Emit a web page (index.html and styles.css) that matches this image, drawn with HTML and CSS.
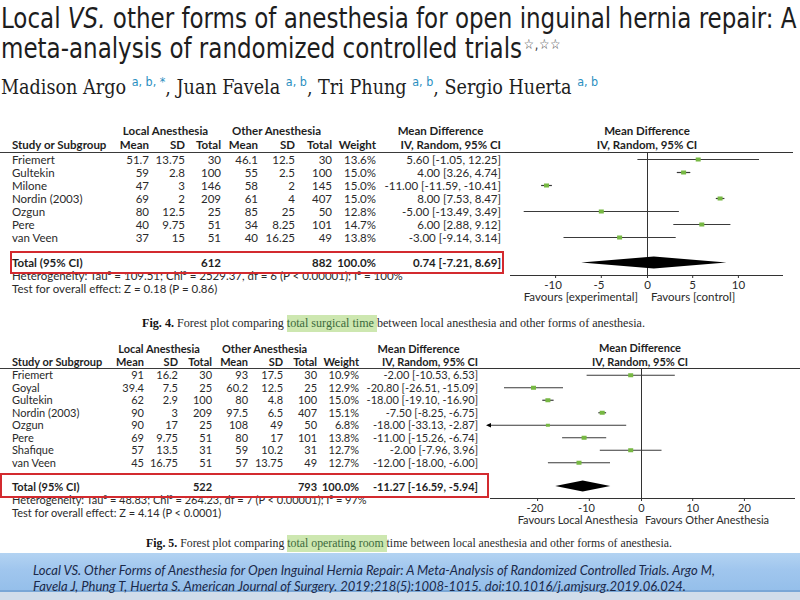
FILE: index.html
```html
<!DOCTYPE html>
<html>
<head>
<meta charset="utf-8">
<link rel="stylesheet" href="styles.css">
</head>
<body>
<header class="paper-head">
  <h1 class="title">Local <i>VS.</i> other forms of anesthesia for open inguinal hernia repair: A<br>meta-analysis of randomized controlled trials<sup class="stars">☆,☆☆</sup></h1>
  <p class="authors">Madison Argo <sup>a, b, *</sup>, Juan Favela <sup>a, b</sup>, Tri Phung <sup>a, b</sup>, Sergio Huerta <sup>a, b</sup></p>
</header>

<section class="figure fig4">
  <div class="forest">
    <div class="table-wrap">
      <table class="data">
        <colgroup><col class="c-study"><col class="c-n1"><col class="c-n2"><col class="c-n3"><col class="c-n4"><col class="c-n5"><col class="c-n6"><col class="c-w"><col class="c-md"></colgroup>
        <thead>
          <tr class="h1"><th></th><th colspan="3" class="grp">Local Anesthesia</th><th colspan="3" class="grp">Other Anesthesia</th><th></th><th class="grp">Mean Difference</th></tr>
          <tr class="h2"><th class="l">Study or Subgroup</th><th>Mean</th><th>SD</th><th>Total</th><th>Mean</th><th>SD</th><th>Total</th><th>Weight</th><th>IV, Random, 95% CI</th></tr>
        </thead>
        <tbody>
          <tr><td class="l">Friemert</td><td>51.7</td><td>13.75</td><td>30</td><td>46.1</td><td>12.5</td><td>30</td><td>13.6%</td><td>5.60 [-1.05, 12.25]</td></tr>
          <tr><td class="l">Gultekin</td><td>59</td><td>2.8</td><td>100</td><td>55</td><td>2.5</td><td>100</td><td>15.0%</td><td>4.00 [3.26, 4.74]</td></tr>
          <tr><td class="l">Milone</td><td>47</td><td>3</td><td>146</td><td>58</td><td>2</td><td>145</td><td>15.0%</td><td>-11.00 [-11.59, -10.41]</td></tr>
          <tr><td class="l">Nordin (2003)</td><td>69</td><td>2</td><td>209</td><td>61</td><td>4</td><td>407</td><td>15.0%</td><td>8.00 [7.53, 8.47]</td></tr>
          <tr><td class="l">Ozgun</td><td>80</td><td>12.5</td><td>25</td><td>85</td><td>25</td><td>50</td><td>12.8%</td><td>-5.00 [-13.49, 3.49]</td></tr>
          <tr><td class="l">Pere</td><td>40</td><td>9.75</td><td>51</td><td>34</td><td>8.25</td><td>101</td><td>14.7%</td><td>6.00 [2.88, 9.12]</td></tr>
          <tr><td class="l">van Veen</td><td>37</td><td>15</td><td>51</td><td>40</td><td>16.25</td><td>49</td><td>13.8%</td><td>-3.00 [-9.14, 3.14]</td></tr>
          <tr class="spacer"><td colspan="9"></td></tr>
          <tr class="total"><td class="l">Total (95% CI)</td><td></td><td></td><td>612</td><td></td><td></td><td>882</td><td>100.0%</td><td>0.74 [-7.21, 8.69]</td></tr>
        </tbody>
      </table>
      <p class="stat">Heterogeneity: Tau² = 109.51; Chi² = 2529.37, df = 6 (P &lt; 0.00001); I² = 100%</p>
      <p class="stat">Test for overall effect: Z = 0.18 (P = 0.86)</p>
      <div class="redbox"></div>
    </div>
    <svg class="plot" width="295" height="180" viewBox="0 0 295 180">
      <text class="ph" x="142" y="11" text-anchor="middle">Mean Difference</text>
      <text class="ph" x="142" y="25" text-anchor="middle">IV, Random, 95% CI</text>
      <line x1="0" y1="28.5" x2="288" y2="28.5" class="ax"/>
      <line x1="142.5" y1="28" x2="142.5" y2="151" class="ax"/>
      <line x1="5" y1="151.5" x2="278" y2="151.5" class="ax"/>
      <g class="ax">
        <line x1="50.6" y1="151" x2="50.6" y2="154"/>
        <line x1="96.3" y1="151" x2="96.3" y2="154"/>
        <line x1="142.5" y1="151" x2="142.5" y2="154"/>
        <line x1="187.7" y1="151" x2="187.7" y2="154"/>
        <line x1="233.4" y1="151" x2="233.4" y2="154"/>
      </g>
      <g class="tick" text-anchor="middle">
        <text x="48" y="165">-10</text>
        <text x="94" y="165">-5</text>
        <text x="142.5" y="165">0</text>
        <text x="187.7" y="165">5</text>
        <text x="233.4" y="165">10</text>
      </g>
      <text class="tick" x="133" y="177" text-anchor="end">Favours [experimental]</text>
      <text class="tick" x="146" y="177">Favours [control]</text>
      <g class="ci">
        <line x1="132.4" y1="35.5" x2="254" y2="35.5"/>
        <line x1="171.8" y1="48.5" x2="185.3" y2="48.5"/>
        <line x1="36.1" y1="61.5" x2="46.9" y2="61.5"/>
        <line x1="210.8" y1="74.5" x2="219.4" y2="74.5"/>
        <line x1="18.7" y1="87.5" x2="173.9" y2="87.5"/>
        <line x1="168.3" y1="100.5" x2="225.4" y2="100.5"/>
        <line x1="58.5" y1="113.5" x2="170.7" y2="113.5"/>
      </g>
      <g class="pt">
        <rect x="190.7" y="33.5" width="5" height="4"/>
        <rect x="176.1" y="46.5" width="5" height="4"/>
        <rect x="39" y="59.5" width="5" height="4"/>
        <rect x="212.6" y="72.5" width="5" height="4"/>
        <rect x="93.8" y="85.5" width="5" height="4"/>
        <rect x="194.3" y="98.5" width="5" height="4"/>
        <rect x="112.1" y="111.5" width="5" height="4"/>
      </g>
      <polygon class="dia" points="76.1,138.5 148.8,132.5 221.4,138.5 148.8,144.5"/>
    </svg>
  </div>
  <p class="caption"><b>Fig. 4.</b> Forest plot comparing <mark>total surgical time </mark>between local anesthesia and other forms of anesthesia.</p>
</section>

<section class="figure fig5">
  <div class="forest">
    <div class="table-wrap">
      <table class="data">
        <colgroup><col class="c-study"><col class="c-n1"><col class="c-n2"><col class="c-n3"><col class="c-n4"><col class="c-n5"><col class="c-n6"><col class="c-w"><col class="c-md"></colgroup>
        <thead>
          <tr class="h1"><th></th><th colspan="3" class="grp">Local Anesthesia</th><th colspan="3" class="grp">Other Anesthesia</th><th></th><th class="grp">Mean Difference</th></tr>
          <tr class="h2"><th class="l">Study or Subgroup</th><th>Mean</th><th>SD</th><th>Total</th><th>Mean</th><th>SD</th><th>Total</th><th>Weight</th><th>IV, Random, 95% CI</th></tr>
        </thead>
        <tbody>
          <tr><td class="l">Friemert</td><td>91</td><td>16.2</td><td>30</td><td>93</td><td>17.5</td><td>30</td><td>10.9%</td><td>-2.00 [-10.53, 6.53]</td></tr>
          <tr><td class="l">Goyal</td><td>39.4</td><td>7.5</td><td>25</td><td>60.2</td><td>12.5</td><td>25</td><td>12.9%</td><td>-20.80 [-26.51, -15.09]</td></tr>
          <tr><td class="l">Gultekin</td><td>62</td><td>2.9</td><td>100</td><td>80</td><td>4.8</td><td>100</td><td>15.0%</td><td>-18.00 [-19.10, -16.90]</td></tr>
          <tr><td class="l">Nordin (2003)</td><td>90</td><td>3</td><td>209</td><td>97.5</td><td>6.5</td><td>407</td><td>15.1%</td><td>-7.50 [-8.25, -6.75]</td></tr>
          <tr><td class="l">Ozgun</td><td>90</td><td>17</td><td>25</td><td>108</td><td>49</td><td>50</td><td>6.8%</td><td>-18.00 [-33.13, -2.87]</td></tr>
          <tr><td class="l">Pere</td><td>69</td><td>9.75</td><td>51</td><td>80</td><td>17</td><td>101</td><td>13.8%</td><td>-11.00 [-15.26, -6.74]</td></tr>
          <tr><td class="l">Shafique</td><td>57</td><td>13.5</td><td>31</td><td>59</td><td>10.2</td><td>31</td><td>12.7%</td><td>-2.00 [-7.96, 3.96]</td></tr>
          <tr><td class="l">van Veen</td><td>45</td><td>16.75</td><td>51</td><td>57</td><td>13.75</td><td>49</td><td>12.7%</td><td>-12.00 [-18.00, -6.00]</td></tr>
          <tr class="spacer"><td colspan="9"></td></tr>
          <tr class="total"><td class="l">Total (95% CI)</td><td></td><td></td><td>522</td><td></td><td></td><td>793</td><td>100.0%</td><td>-11.27 [-16.59, -5.94]</td></tr>
        </tbody>
      </table>
      <p class="stat">Heterogeneity: Tau² = 48.83; Chi² = 264.23, df = 7 (P &lt; 0.00001); I² = 97%</p>
      <p class="stat">Test for overall effect: Z = 4.14 (P &lt; 0.0001)</p>
      <div class="redbox"></div>
    </div>
    <svg class="plot" width="320" height="185" viewBox="0 0 320 185">
      <text class="ph" x="160" y="10" text-anchor="middle">Mean Difference</text>
      <text class="ph" x="160" y="24" text-anchor="middle">IV, Random, 95% CI</text>
      <line x1="0" y1="26.5" x2="320" y2="26.5" class="ax"/>
      <line x1="161.5" y1="26" x2="161.5" y2="156" class="ax"/>
      <line x1="10" y1="156.5" x2="315" y2="156.5" class="ax"/>
      <g class="ax">
        <line x1="57.6" y1="156" x2="57.6" y2="159"/>
        <line x1="109.3" y1="156" x2="109.3" y2="159"/>
        <line x1="161.5" y1="156" x2="161.5" y2="159"/>
        <line x1="212.7" y1="156" x2="212.7" y2="159"/>
        <line x1="264.4" y1="156" x2="264.4" y2="159"/>
      </g>
      <g class="tick" text-anchor="middle">
        <text x="55" y="170">-20</text>
        <text x="106.5" y="170">-10</text>
        <text x="161.5" y="170">0</text>
        <text x="212.7" y="170">10</text>
        <text x="264.4" y="170">20</text>
      </g>
      <text class="tick" x="158" y="182" text-anchor="end">Favours Local Anesthesia</text>
      <text class="tick" x="165" y="182">Favours Other Anesthesia</text>
      <g class="ci">
        <line x1="106.6" y1="33.25" x2="194.8" y2="33.25"/>
        <line x1="24" y1="45.75" x2="83" y2="45.75"/>
        <line x1="62.3" y1="58.25" x2="73.6" y2="58.25"/>
        <line x1="118.3" y1="70.75" x2="126.1" y2="70.75"/>
        <line x1="9" y1="83.25" x2="146.2" y2="83.25"/>
        <line x1="82.1" y1="95.75" x2="126.2" y2="95.75"/>
        <line x1="119.8" y1="108.25" x2="181.5" y2="108.25"/>
        <line x1="67.9" y1="120.75" x2="130" y2="120.75"/>
      </g>
      <polygon class="arrow" points="6,83.25 11,81 11,85.5"/>
      <g class="pt">
        <rect x="148.2" y="31.25" width="5" height="4"/>
        <rect x="51" y="43.75" width="5" height="4"/>
        <rect x="65.4" y="56.25" width="5" height="4"/>
        <rect x="119.7" y="68.75" width="5" height="4"/>
        <rect x="65.9" y="81.75" width="4" height="3"/>
        <rect x="101.6" y="93.75" width="5" height="4"/>
        <rect x="148.2" y="106.25" width="5" height="4"/>
        <rect x="96.5" y="118.75" width="5" height="4"/>
      </g>
      <polygon class="dia" points="75.2,144 102.7,138.5 130.3,144 102.7,149.5"/>
    </svg>
  </div>
  <p class="caption"><b>Fig. 5.</b> Forest plot comparing <mark>total operating room </mark>time between local anesthesia and other forms of anesthesia.</p>
</section>

<footer class="cite">
  <p>Local VS. Other Forms of Anesthesia for Open Inguinal Hernia Repair: A Meta-Analysis of Randomized Controlled Trials. Argo M,<br>Favela J, Phung T, Huerta S. American Journal of Surgery. 2019;218(5):1008-1015. doi:10.1016/j.amjsurg.2019.06.024.</p>
</footer>
</body>
</html>
```

FILE: styles.css
```css
html, body {
  margin: 0;
  padding: 0;
}
body {
  width: 800px;
  height: 600px;
  overflow: hidden;
  background: #ffffff;
  color: #222;
  font-family: Lato, "Open Sans", sans-serif;
}

/* ---------- article head ---------- */
.paper-head {
  padding-left: 1px;
}
.title {
  margin: 4px 0 0 0;
  font-family: "Liberation Sans Narrow", "DejaVu Sans Condensed", "Liberation Sans", sans-serif;
  font-weight: 400;
  font-size: 28.5px;
  line-height: 30px;
  color: #1d1d1d;
  white-space: nowrap;
  transform: scaleX(0.897);
  transform-origin: 0 0;
}
.title i {
  font-style: italic;
}
.stars {
  font-size: 14px;
  line-height: 1;
  vertical-align: 0;
  position: relative;
  top: -9px;
  margin-left: 2px;
  letter-spacing: 1px;
  color: #333;
}
.authors {
  margin: 11px 0 0 0;
  font-family: "DejaVu Serif Condensed", "DejaVu Serif", "Liberation Serif", serif;
  font-size: 20.5px;
  line-height: 24px;
  color: #1d1d1d;
  white-space: nowrap;
  transform: scaleX(0.955);
  transform-origin: 0 0;
}
.authors sup {
  font-family: "DejaVu Sans Condensed", "DejaVu Sans", sans-serif;
  font-size: 13px;
  line-height: 1;
  color: #2b8fbf;
  vertical-align: 0;
  position: relative;
  top: -8px;
}

/* ---------- figures ---------- */
.fig4 {
  margin-top: 25px;
}
.fig5 {
  margin-top: 12px;
}
.forest {
  display: flex;
  align-items: flex-start;
}
.table-wrap {
  position: relative;
  flex: none;
}
.fig4 .table-wrap { width: 505px; }
.fig5 .table-wrap { width: 480px; }

.data {
  border-collapse: collapse;
  table-layout: fixed;
  font-size: 11.5px;
  color: #2a2a2a;
}
.fig4 .data { width: 505px; }
.fig5 .data { width: 480px; font-size: 11px; }

.data th, .data td {
  padding: 0;
  text-align: right;
  white-space: nowrap;
  overflow: visible;
}
.data th {
  font-weight: 700;
  color: #1e1e1e;
}
.data .l {
  text-align: left;
  padding-left: 12px;
}
.data th.grp {
  text-align: center;
}
.data .h2 th {
  border-bottom: 1px solid #3a3a3a;
}
.data .total td {
  font-weight: 700;
  color: #1e1e1e;
}

/* fig 4 geometry */
.fig4 .h1 th { height: 14px; line-height: 14px; }
.fig4 .h2 th { height: 14px; line-height: 14px; }
.fig4 tbody td { height: 13px; line-height: 13px; }
.fig4 .spacer td { height: 12px; }
.fig4 .c-study { width: 110px; }
.fig4 .c-n1 { width: 39px; }
.fig4 .c-n2 { width: 36px; }
.fig4 .c-n3 { width: 36px; }
.fig4 .c-n4 { width: 37px; }
.fig4 .c-n5 { width: 37px; }
.fig4 .c-n6 { width: 37px; }
.fig4 .c-w { width: 44px; }
.fig4 .c-md { width: 129px; }
.fig4 .data th:last-child,
.fig4 .data td:last-child { padding-right: 4px; }
.fig4 .data .grp:last-child { padding-right: 0; padding-left: 0; }

/* fig 5 geometry */
.fig5 .h1 th { height: 13px; line-height: 13px; }
.fig5 .h2 th { height: 13px; line-height: 13px; }
.fig5 tbody td { height: 12.5px; line-height: 12.5px; }
.fig5 .spacer td { height: 10.5px; }
.fig5 .total td { height: 13px; line-height: 13px; }
.fig5 .c-study { width: 106px; }
.fig5 .c-n1 { width: 38px; }
.fig5 .c-n2 { width: 34px; }
.fig5 .c-n3 { width: 34px; }
.fig5 .c-n4 { width: 36px; }
.fig5 .c-n5 { width: 35px; }
.fig5 .c-n6 { width: 34px; }
.fig5 .c-w { width: 42px; }
.fig5 .c-md { width: 121px; }
.fig5 .data th:last-child,
.fig5 .data td:last-child { padding-right: 2px; }

.stat {
  margin: 0;
  padding-left: 12px;
  font-size: 11.5px;
  line-height: 13px;
  color: #2a2a2a;
  white-space: nowrap;
}
.fig5 .stat { font-size: 11px; }

.redbox {
  position: absolute;
  border: 2px solid #d32a2f;
  z-index: 2;
  pointer-events: none;
}
.fig4 .redbox {
  left: 10px;
  top: 127px;
  width: 490px;
  height: 19px;
}
.fig5 .redbox {
  left: 0;
  top: 131px;
  width: 485px;
  height: 21px;
}

/* ---------- plots ---------- */
.plot {
  display: block;
  flex: none;
  font-family: Lato, "Open Sans", sans-serif;
}
.plot .ph {
  font-size: 11.5px;
  font-weight: 700;
  fill: #1e1e1e;
}
.fig5 .plot .ph { font-size: 11px; }
.plot .tick {
  font-size: 11.5px;
  fill: #2a2a2a;
}
.fig5 .plot .tick { font-size: 11px; }
.plot .ax, .plot .ax line {
  stroke: #333;
  stroke-width: 1;
}
.plot .ci line {
  stroke: #3a3a3a;
  stroke-width: 1.2;
}
.plot .pt rect {
  fill: #77b843;
}
.plot .dia, .plot .arrow {
  fill: #000;
}

/* ---------- captions ---------- */
.caption {
  margin: 12px 0 0 0;
  text-align: center;
  font-family: "Liberation Serif", "DejaVu Serif", serif;
  font-size: 11.8px;
  line-height: 14px;
  color: #2a2a2a;
}
.fig4 .caption {
  font-size: 12.1px;
  padding-right: 13px;
}
.fig5 .caption {
  margin-top: 9px;
  padding-left: 18px;
}
.caption b {
  font-weight: 700;
  color: #111;
}
.caption mark {
  background: #cde7b0;
  color: #3c6a3c;
  padding: 1px 0 2px;
}

/* ---------- citation band ---------- */
.cite {
  margin-top: 3px;
  height: 37px;
  background: linear-gradient(to bottom, #b3d3f2 0%, #a0c6ee 45%, #95bfea 100%);
  border-bottom: 2px solid #7aa7d6;
  box-shadow: 0 8px 0 #d1ddea;
}
.cite p {
  margin: 0;
  padding: 9px 0 0 33px;
  font-family: Lato, "Open Sans", sans-serif;
  font-style: italic;
  font-size: 13px;
  line-height: 16px;
  color: #1b2949;
  white-space: nowrap;
}
```
